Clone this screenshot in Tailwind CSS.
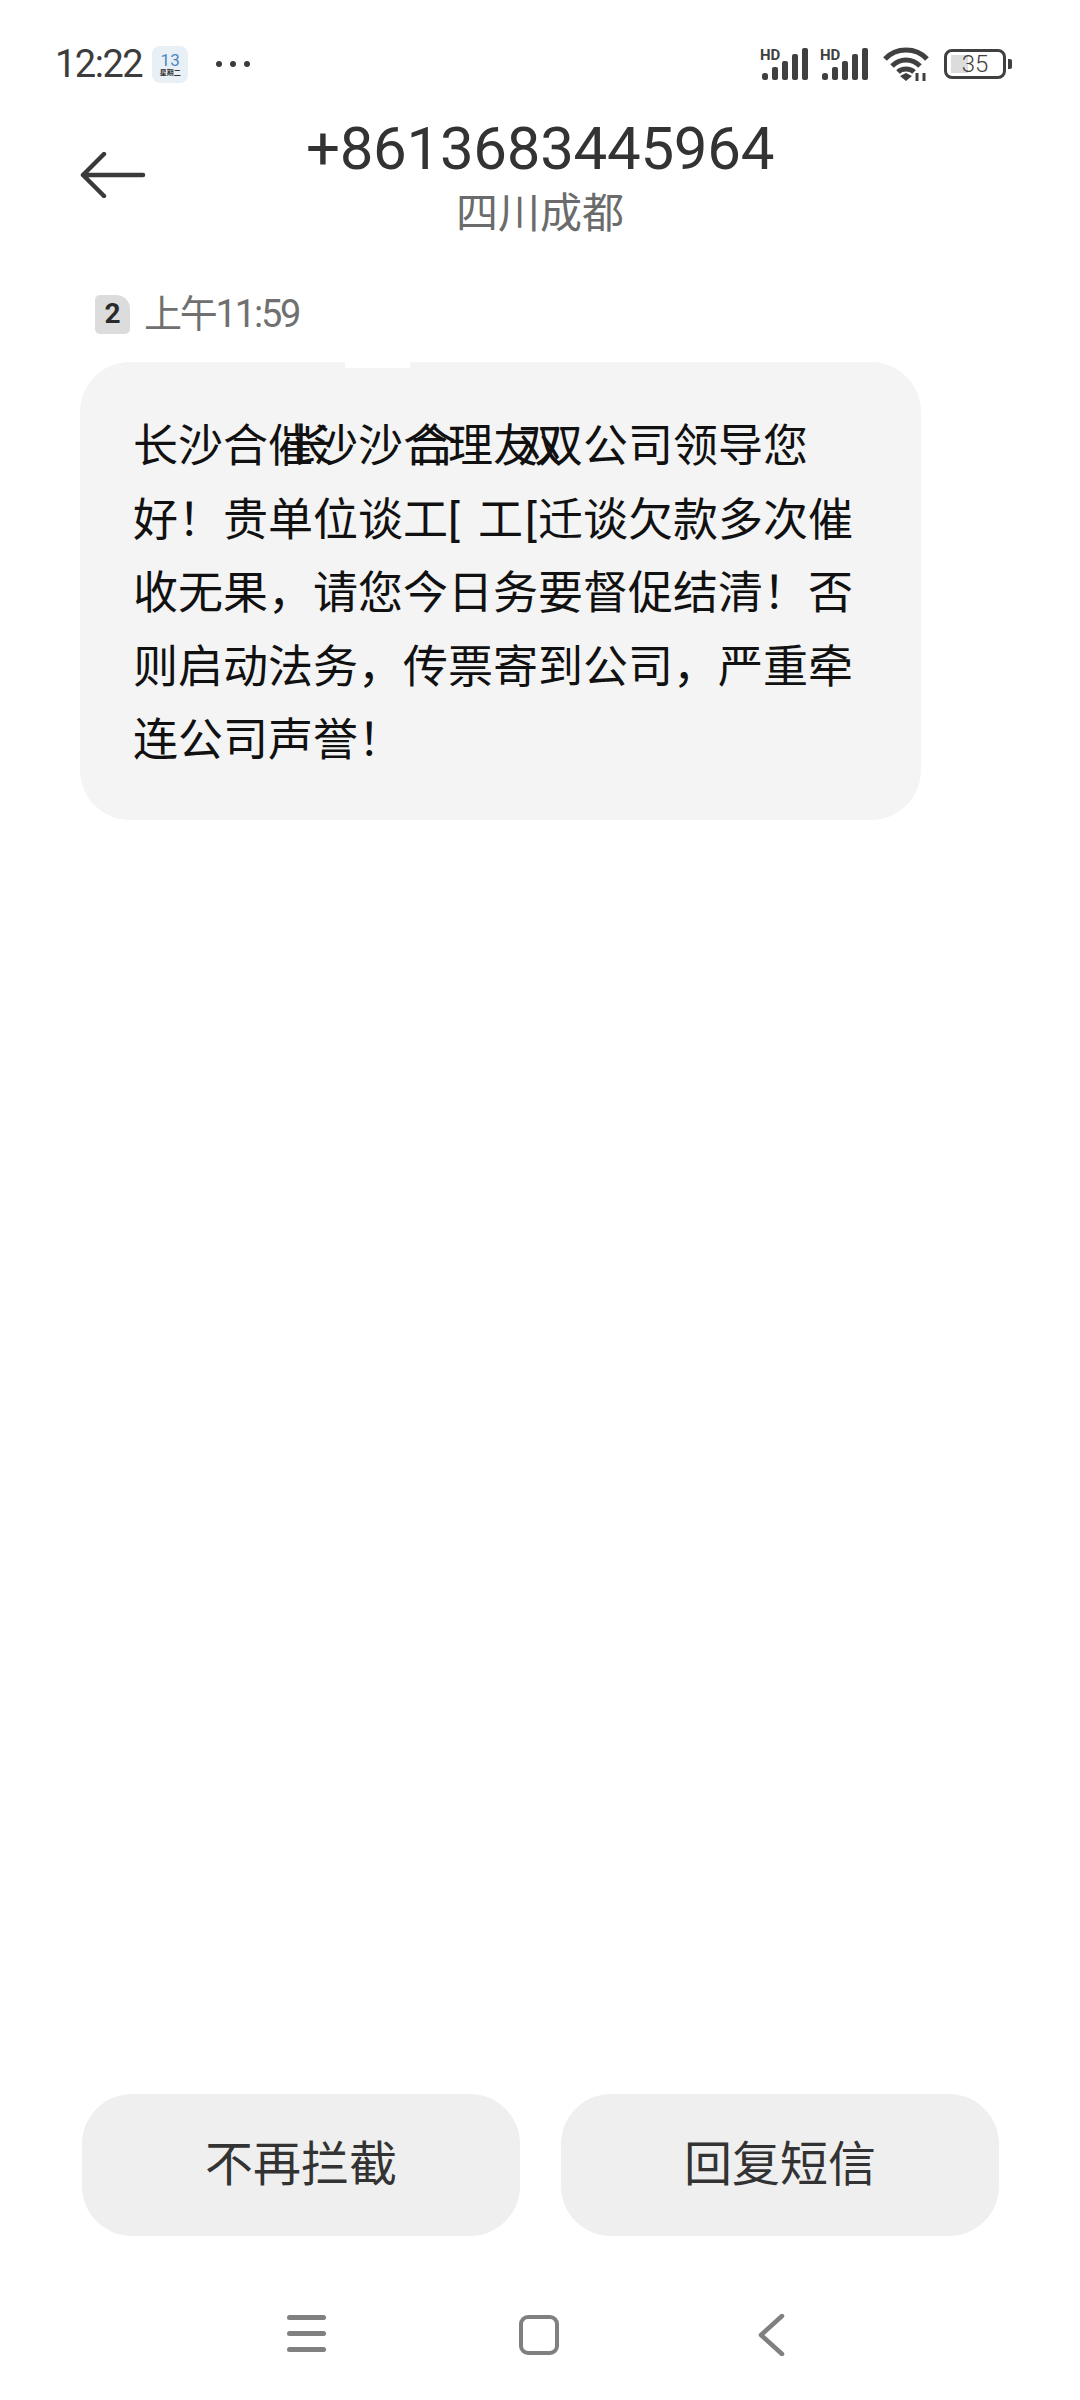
<!DOCTYPE html>
<html lang="zh-CN">
<head>
    <meta charset="UTF-8">
    <title>短信</title>
    <script src="https://cdn.jsdelivr.net/npm/@tailwindcss/browser@4"></script>
</head>
<body class="bg-white">
<div class="w-[1080px] h-[2400px] flex flex-col font-['Roboto','Noto_Sans_CJK_SC',sans-serif] text-[#333]">

    <!-- status bar -->
    <div class="h-[124px] flex items-start justify-between pl-[55px] pr-[68px] pt-[46px]">
        <div class="flex items-center h-[36px]">
            <span class="text-[38px] leading-[36px] tracking-[-1.5px] text-[#3c3c3c]">12:22</span>
            <div class="ml-[10px] w-[36px] h-[37px] rounded-[8px] bg-[#e8f0f6] flex flex-col items-center justify-center">
                <span class="text-[17px] leading-[17px] text-[#4a86c5]">13</span>
                <span class="text-[7px] leading-[8px] font-bold text-[#333]">星期二</span>
            </div>
            <div class="ml-[28px] flex gap-[8px]">
                <div class="w-[6px] h-[6px] rounded-full bg-[#3c3c3c]"></div>
                <div class="w-[6px] h-[6px] rounded-full bg-[#3c3c3c]"></div>
                <div class="w-[6px] h-[6px] rounded-full bg-[#3c3c3c]"></div>
            </div>
        </div>
        <div class="flex items-center h-[36px] text-[#404040]">
            <svg width="50" height="34" viewBox="0 0 50 34" fill="currentColor"><text x="0" y="13" font-size="15" font-weight="700" font-family="Roboto">HD</text><rect x="2" y="26" width="6" height="7" rx="2.5"/><rect x="12" y="20" width="6" height="13" rx="2"/><rect x="22" y="14" width="6" height="19" rx="2"/><rect x="32" y="7" width="6" height="26" rx="2"/><rect x="42" y="1" width="6" height="32" rx="2"/></svg>
            <svg class="ml-[10px]" width="50" height="34" viewBox="0 0 50 34" fill="currentColor"><text x="0" y="13" font-size="15" font-weight="700" font-family="Roboto">HD</text><rect x="2" y="26" width="6" height="7" rx="2.5"/><rect x="12" y="20" width="6" height="13" rx="2"/><rect x="22" y="14" width="6" height="19" rx="2"/><rect x="32" y="7" width="6" height="26" rx="2"/><rect x="42" y="1" width="6" height="32" rx="2"/></svg>
            <svg class="ml-[13px]" width="46" height="36" viewBox="0 0 46 36" fill="none" stroke="currentColor" stroke-width="5"><path d="M2 13C13 1 33 1 44 13"/><path d="M9 20C17 12 29 12 37 20"/><path d="M15 26C19 22 27 22 31 26"/><path d="M23 35l-6-5 6-3 6 3z" fill="currentColor" stroke="none"/><path d="M34 27v8M41 35v-8" stroke-width="3"/></svg>
            <div class="ml-[15px] w-[62px] h-[30px] rounded-[8px] border-[3px] border-[#404040] relative flex items-center justify-center">
                <div class="absolute left-[4px] top-[3px] bottom-[3px] w-[17px] bg-[#dcdcdc]"></div>
                <span class="relative text-[24px] leading-none font-light">35</span>
            </div>
            <div class="ml-[2px] w-[4px] h-[10px] rounded-r-[2px] bg-[#404040]"></div>
        </div>
    </div>

    <!-- header -->
    <div class="relative h-[122px] flex flex-col items-center">
        <svg class="absolute left-[80px] top-[28px]" width="66" height="46" viewBox="0 0 66 46" fill="none" stroke="#3a3a3a" stroke-width="4.5" stroke-linecap="round" stroke-linejoin="round"><path d="M24 2L3 23l21 21M3 23h60"/></svg>
        <div class="text-[60px] leading-[76px] tracking-[-0.3px] text-[#333] mt-[-13px]">+8613683445964</div>
        <div class="text-[42px] leading-[50px] mt-[2px] text-[#6b6b6b]">四川成都</div>
    </div>

    <!-- message meta -->
    <div class="flex items-center h-[40px] mt-[48px] ml-[95px]">
        <div class="w-[35px] h-[39px] rounded-[5px] rounded-tr-[14px] bg-[#dcdcdc] flex items-center justify-center text-[28px] font-bold text-[#2a2a2a]">2</div>
        <span class="ml-[14px] text-[38px] tracking-[-2.2px] text-[#707070]">上午11:59</span>
    </div>

    <!-- bubble, the overlapping characters in the first lines are drawn over the base text -->
    <div class="relative mt-[28px] ml-[80px] w-[841px] h-[458px] rounded-[50px] bg-[#f4f4f4] pl-[53px] pt-[48px] text-[45px] leading-[73.5px] text-[#111]">
        <div class="absolute left-[265px] top-0 w-[65px] h-[6px] bg-white"></div>
        <p class="relative whitespace-nowrap">长沙合催沙沙合理友双公司领导您
            <span class="absolute left-[155px] top-0">长</span>
            <span class="absolute left-[278px] top-0">合</span>
            <span class="absolute left-[385px] top-0">双</span>
        </p>
        <p class="relative whitespace-nowrap">好！贵单位谈工<span class="inline-block w-[45px]">[</span>　　谈欠款多次催
            <span class="absolute left-[345px] top-0">工</span>
            <span class="absolute left-[392px] top-0">[</span>
            <span class="absolute left-[405px] top-0">迁</span>
        </p>
        <p class="relative whitespace-nowrap">收无果，请您今日务要督促结清！否</p>
        <p>则启动法务，传票寄到公司，严重牵</p>
        <p>连公司声誉！</p>
    </div>

    <div class="flex-1"></div>

    <!-- buttons -->
    <div class="flex gap-[41px] ml-[82px]">
        <button class="w-[438px] h-[142px] rounded-[50px] bg-[#efefef] text-[48px] text-[#333]">不再拦截</button>
        <button class="w-[438px] h-[142px] rounded-[50px] bg-[#efefef] text-[48px] text-[#333]">回复短信</button>
    </div>

    <!-- nav bar -->
    <div class="h-[164px] relative flex items-start">
        <div class="ml-[287px] mt-[79px] w-[39px] flex flex-col gap-[11px]">
            <div class="h-[5px] rounded-full bg-[#808080]"></div>
            <div class="h-[5px] rounded-full bg-[#808080]"></div>
            <div class="h-[5px] rounded-full bg-[#808080]"></div>
        </div>
        <div class="ml-[193px] mt-[79px] w-[40px] h-[40px] rounded-[9px] border-[4px] border-[#808080]"></div>
        <svg class="ml-[198px] mt-[78px]" width="28" height="42" viewBox="0 0 28 42" fill="none" stroke="#808080" stroke-width="4.5" stroke-linecap="round" stroke-linejoin="round"><path d="M25 2L4 21l21 19"/></svg>
    </div>
</div>
</body>
</html>
